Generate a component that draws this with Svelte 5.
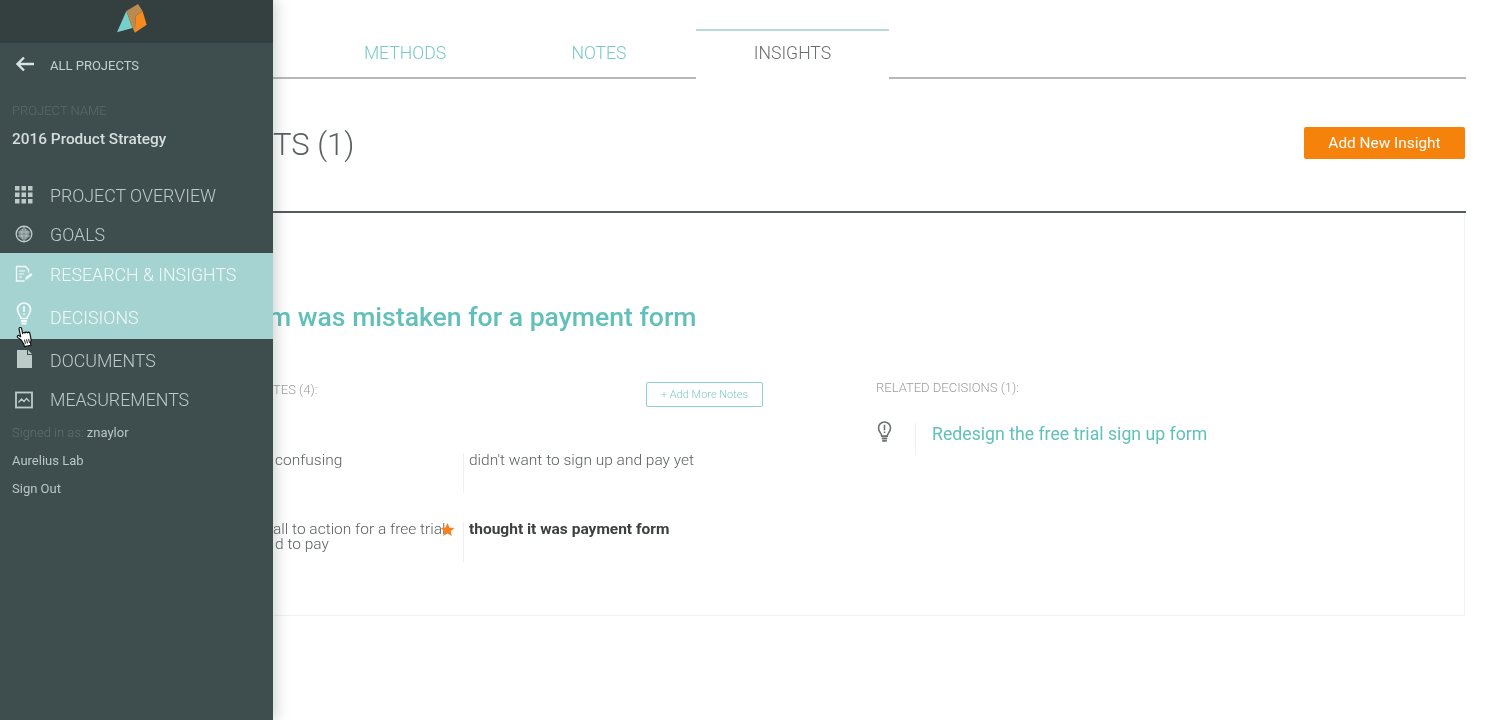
<script>
  const nav = [
    { label: 'PROJECT OVERVIEW', icon: 'grid' },
    { label: 'GOALS', icon: 'globe' },
    { label: 'RESEARCH & INSIGHTS', icon: 'edit', active: true },
    { label: 'DECISIONS', icon: 'bulb', active: true },
    { label: 'DOCUMENTS', icon: 'doc' },
    { label: 'MEASUREMENTS', icon: 'chart' }
  ];
  const tabs = ['METHODS', 'NOTES', 'INSIGHTS'];
</script>

{#snippet bulb(cls)}
  <svg class={cls} viewBox="0 0 16 24" fill="none" stroke="currentColor" stroke-width="1.7">
    <path d="M5 16.5C5 13.5 1.5 12 1.5 7.5a6.5 6.5 0 0 1 13 0C14.500 12 11 13.500 11 16.500Z" />
    <path d="M8 4v6M8 11.500v1.500" />
    <path d="M5 19h6M5.500 21.500h5" stroke-width="2" />
  </svg>
{/snippet}

<div class="page">
  <aside class="sidebar">
    <div class="logo-bar">
      <svg class="logo" viewBox="0 0 30 30">
        <path d="M1 28.300 10 7.700 16 24.300Z" fill="#78cfc9" />
        <path d="M10 7.700 21.300 1 25.700 7.700 19 12.700 18.300 28.700 16 24.300Z" fill="#b98a52" />
        <path d="M19 12.700 25.700 7.700 29.700 21 18.300 28.700Z" fill="#f58a1f" />
      </svg>
    </div>

    <a class="back" href="#projects">
      <svg viewBox="0 0 20 16" class="arrow"><path d="M9 1.500 2.500 8 9 14.500M3 8h16" fill="none" stroke="currentColor" stroke-width="2.400" /></svg>
      <span>ALL PROJECTS</span>
    </a>

    <div class="project">
      <div class="project-label">PROJECT NAME</div>
      <div class="project-name">2016 Product Strategy</div>
    </div>

    <ul class="nav">
      {#each nav as item}
        <li class="item {item.icon}-row" class:active={item.active}>
          <span class="icon">
            {#if item.icon === 'grid'}
              <svg viewBox="0 0 18 18" fill="currentColor">
                {#each [0, 6.5, 13] as y}
                  {#each [0, 6.5, 13] as x}
                    <rect x={x} y={y} width="4.500" height="4.500" />
                  {/each}
                {/each}
              </svg>
            {:else if item.icon === 'globe'}
              <svg viewBox="0 0 18 18" fill="none" stroke="currentColor">
                <circle cx="9" cy="9" r="7.800" stroke-width="1.400" />
                <circle cx="9" cy="9" r="5.500" fill="currentColor" opacity=".55" stroke="none" />
                <path d="M3 7h12M3 11h12M9 2c-3 4-3 10 0 14M9 2c3 4 3 10 0 14" stroke-width=".7" />
              </svg>
            {:else if item.icon === 'edit'}
              <svg viewBox="0 0 18 18" fill="none" stroke="currentColor" stroke-width="1.400">
                <path d="M9.500 16H1.500V1.500h9l3 3v3" />
                <path d="M4 6h6M4 9h5M4 12h3" stroke-width="1" />
                <path d="M10 15l1-3 5-4 1.500 2-5 4Z" fill="currentColor" stroke="none" />
              </svg>
            {:else if item.icon === 'bulb'}
              {@render bulb('bulb-nav')}
            {:else if item.icon === 'doc'}
              <svg class="doc-icon" viewBox="0 0 15 18" fill="currentColor"><path d="M0 0h10v5h5v13H0ZM11 0l4 4h-4Z" /></svg>
            {:else}
              <svg viewBox="0 0 18 17" fill="none" stroke="currentColor">
                <rect x="1" y="1" width="16" height="15" stroke-width="1.800" />
                <path d="M3.500 11l3-3.500 2.500 2.500 2.500-3 3 3" stroke-width="1.300" />
              </svg>
            {/if}
          </span>
          <span>{item.label}</span>
        </li>
      {/each}
    </ul>

    <div class="account">
      <div><span class="dim">Signed in as:</span> znaylor</div>
      <div>Aurelius Lab</div>
      <div>Sign Out</div>
    </div>

    <svg class="cursor" viewBox="0 0 16 21">
      <path d="M4.500 13 1.500 9.500c-.8-1.200.8-2.300 1.800-1.300L4.500 9.500V2c0-1.600 2.500-1.600 2.500 0v5c0-1.200 2.300-1.200 2.300 0 0-1 2.200-1 2.200.3 0-.8 2.200-.8 2.200.7v5c0 2-.8 3-1.300 4.500v2H6v-2c-.5-1.500-1-3-1.500-4.500Z" fill="#fff" stroke="#111" stroke-width="1.100" stroke-linejoin="round" />
      <path d="M7.500 13v4M9.500 13v4M11.500 13v4" stroke="#111" stroke-width=".9" />
    </svg>
  </aside>

  <main class="main">
    <nav class="tabs">
      <div class="tabs-lead"></div>
      {#each tabs as tab, i}
        <div class="tab" class:current={i === 2}>{tab}</div>
      {/each}
      <div class="tabs-rest"></div>
    </nav>

    <header class="title-row">
      <h1>TS (1)</h1>
      <button class="add-insight">Add New Insight</button>
    </header>

    <section class="card">
      <h2>m was mistaken for a payment form</h2>
      <div class="columns">
        <div class="notes">
          <div class="notes-head">
            <span class="label">TES (4):</span>
            <button class="add-notes">+ Add More Notes</button>
          </div>
          <div class="note-row">
            <div class="note-left indent">confusing</div>
            <div class="note-right">didn't want to sign up and pay yet</div>
          </div>
          <div class="note-row">
            <div class="note-left">
              all to action for a free trial<br /><span class="indent">d to pay</span>
              <svg class="star" viewBox="0 0 24 24"><path d="M12 1.500l3.200 7.300 7.800.7-5.900 5.200 1.800 7.800L12 18.400 5.100 22.500l1.800-7.800L1 9.500l7.800-.7z" /></svg>
            </div>
            <div class="note-right strong">thought it was payment form</div>
          </div>
        </div>
        <div class="decisions">
          <span class="label">RELATED DECISIONS (1):</span>
          <div class="decision">
            <div class="decision-icon">{@render bulb('bulb-dark')}</div>
            <a href="#decision">Redesign the free trial sign up form</a>
          </div>
        </div>
      </div>
    </section>
  </main>
</div>

<style>
  :global(body) {
    margin: 0;
    background: #fff;
    overflow: hidden;
  }

  .page {
    display: flex;
    width: 1504px;
    height: 720px;
    overflow: hidden;
    font-family: Roboto, "Liberation Sans", sans-serif;
    filter: blur(0.45px);
  }

  .sidebar {
    position: relative;
    z-index: 1;
    flex: 0 0 273px;
    background: #3e4e4f;
    color: #c4d1cf;
    box-shadow: 4px 0 12px rgba(60, 70, 70, 0.22);
  }

  .logo-bar {
    display: flex;
    justify-content: center;
    height: 43px;
    background: #343f40;
  }

  .logo {
    width: 31px;
    height: 31px;
    margin: 3px 0 0 -11px;
  }

  .back {
    display: flex;
    align-items: center;
    height: 44px;
    padding-left: 15px;
    color: inherit;
    text-decoration: none;
    font-size: 13px;
    font-weight: 400;
  }

  .arrow {
    width: 20px;
    height: 16px;
    margin-right: 15px;
    margin-top: -2px;
    color: #d7e4e1;
  }

  .project {
    padding: 16px 0 0 12px;
  }

  .project-label {
    font-size: 13px;
    line-height: 16px;
    font-weight: 300;
    color: #5a6a6b;
  }

  .project-name {
    margin-top: 10px;
    font-size: 15.400px;
    line-height: 20px;
    font-weight: 500;
    color: #d5dedc;
  }

  .nav {
    list-style: none;
    margin: 25.500px 0 0 0;
    padding: 0;
  }

  .item {
    box-sizing: border-box;
    display: flex;
    align-items: center;
    height: 39px;
    padding: 2px 0 0 15px;
    font-size: 17.800px;
    font-weight: 300;
    color: #bccac8;
    white-space: nowrap;
  }

  .item.active {
    height: 43px;
    padding-top: 0;
    background: #a5d3d1;
    color: #f2f9f8;
  }

  .item.doc-row {
    height: 42px;
  }

  .item.chart-row {
    height: 36px;
  }

  .icon {
    display: flex;
    width: 18px;
    margin-right: 17px;
    justify-content: center;
  }

  .icon svg {
    width: 18px;
    height: 18px;
    display: block;
  }

  .icon .doc-icon {
    width: 15px;
    margin-top: -3px;
  }

  .icon .bulb-nav {
    width: 16px;
    height: 24px;
    margin-top: -6px;
  }

  .account {
    margin-top: 2px;
    padding-left: 12px;
    font-size: 13px;
    line-height: 28px;
    font-weight: 400;
    color: #b9c7c5;
  }

  .dim {
    color: #5f6f70;
    font-weight: 300;
  }

  .cursor {
    position: absolute;
    left: 16px;
    top: 326px;
    width: 17px;
    height: 22px;
    transform: rotate(-12deg);
  }

  .main {
    flex: 0 0 1193px;
    padding-top: 28px;
    color: #5a5f60;
    font-weight: 300;
  }

  .tabs {
    display: flex;
    height: 51px;
  }

  .tabs-lead,
  .tabs-rest {
    border-bottom: 2px solid #b8b8b8;
  }

  .tabs-lead {
    flex: 0 0 35px;
  }

  .tabs-rest {
    flex: 1;
  }

  .tab {
    box-sizing: border-box;
    width: 194px;
    padding-top: 14.500px;
    text-align: center;
    font-size: 17.600px;
    color: #78cac4;
    border-bottom: 2px solid #b8b8b8;
  }

  .tab.current {
    width: 193px;
    margin-top: 1px;
    padding-top: 12px;
    color: #6a6d6e;
    border-top: 2px solid #b5dcd9;
    border-bottom-color: #fff;
  }

  .title-row {
    box-sizing: border-box;
    display: flex;
    justify-content: space-between;
    align-items: flex-start;
    height: 134px;
    border-bottom: 2px solid #555a5b;
  }

  h1 {
    margin: 46px 0 0 0;
    font-size: 31px;
    line-height: 40px;
    font-weight: 300;
    color: #5a5f60;
  }

  .add-insight {
    width: 161px;
    height: 32px;
    margin: 48px 1px 0 0;
    border: 0;
    border-radius: 2px;
    background: #f5820a;
    color: #fff;
    font: 400 15.400px Roboto, sans-serif;
  }

  .card {
    box-sizing: border-box;
    height: 403px;
    margin-right: 1px;
    padding-top: 87px;
    border-right: 1px solid #f0f1f1;
    border-bottom: 1px solid #f0f1f1;
  }

  h2 {
    margin: 0 0 0 -5px;
    font-size: 26.600px;
    line-height: 34px;
    font-weight: 500;
    color: #62c0bb;
    white-space: nowrap;
  }

  .columns {
    display: flex;
    margin-top: 48px;
  }

  .notes {
    width: 490px;
  }

  .notes-head {
    display: flex;
    justify-content: space-between;
    align-items: flex-start;
    height: 70.500px;
  }

  .label {
    font-size: 13px;
    line-height: 16px;
    color: #9a9d9e;
  }

  .add-notes {
    width: 117px;
    height: 25px;
    padding: 0;
    background: #fff;
    border: 1.500px solid #8ed0cb;
    border-radius: 2px;
    color: #7fcbc6;
    font: 300 11px Roboto, sans-serif;
  }

  .note-row {
    display: grid;
    grid-template-columns: 191px 1fr;
    height: 69px;
    font-size: 15.500px;
    line-height: 15px;
    color: #5a5f60;
  }

  .note-left {
    position: relative;
    height: 40px;
    white-space: nowrap;
    border-right: 1px solid #eff0f0;
  }

  .indent {
    padding-left: 2px;
  }

  .note-right {
    padding-left: 5px;
    white-space: nowrap;
  }

  .strong {
    font-weight: 700;
    color: #3c4041;
  }

  .star {
    position: absolute;
    right: 8px;
    top: 0;
    width: 15px;
    height: 15px;
    fill: #f5821f;
  }

  .decisions {
    padding-left: 113px;
    margin-top: -5px;
  }

  .decision {
    display: flex;
    align-items: flex-start;
    margin-top: 27px;
  }

  .decision-icon {
    width: 39px;
    height: 32px;
    margin-right: 16px;
    border-right: 1px solid #eff0f0;
    color: #6c7071;
  }

  .bulb-dark {
    display: block;
    width: 15px;
    height: 22px;
    margin-top: -2px;
    margin-left: 1px;
  }

  .decision a {
    font-size: 17.700px;
    line-height: 22px;
    font-weight: 400;
    color: #62c0bb;
    text-decoration: none;
    white-space: nowrap;
  }
</style>
